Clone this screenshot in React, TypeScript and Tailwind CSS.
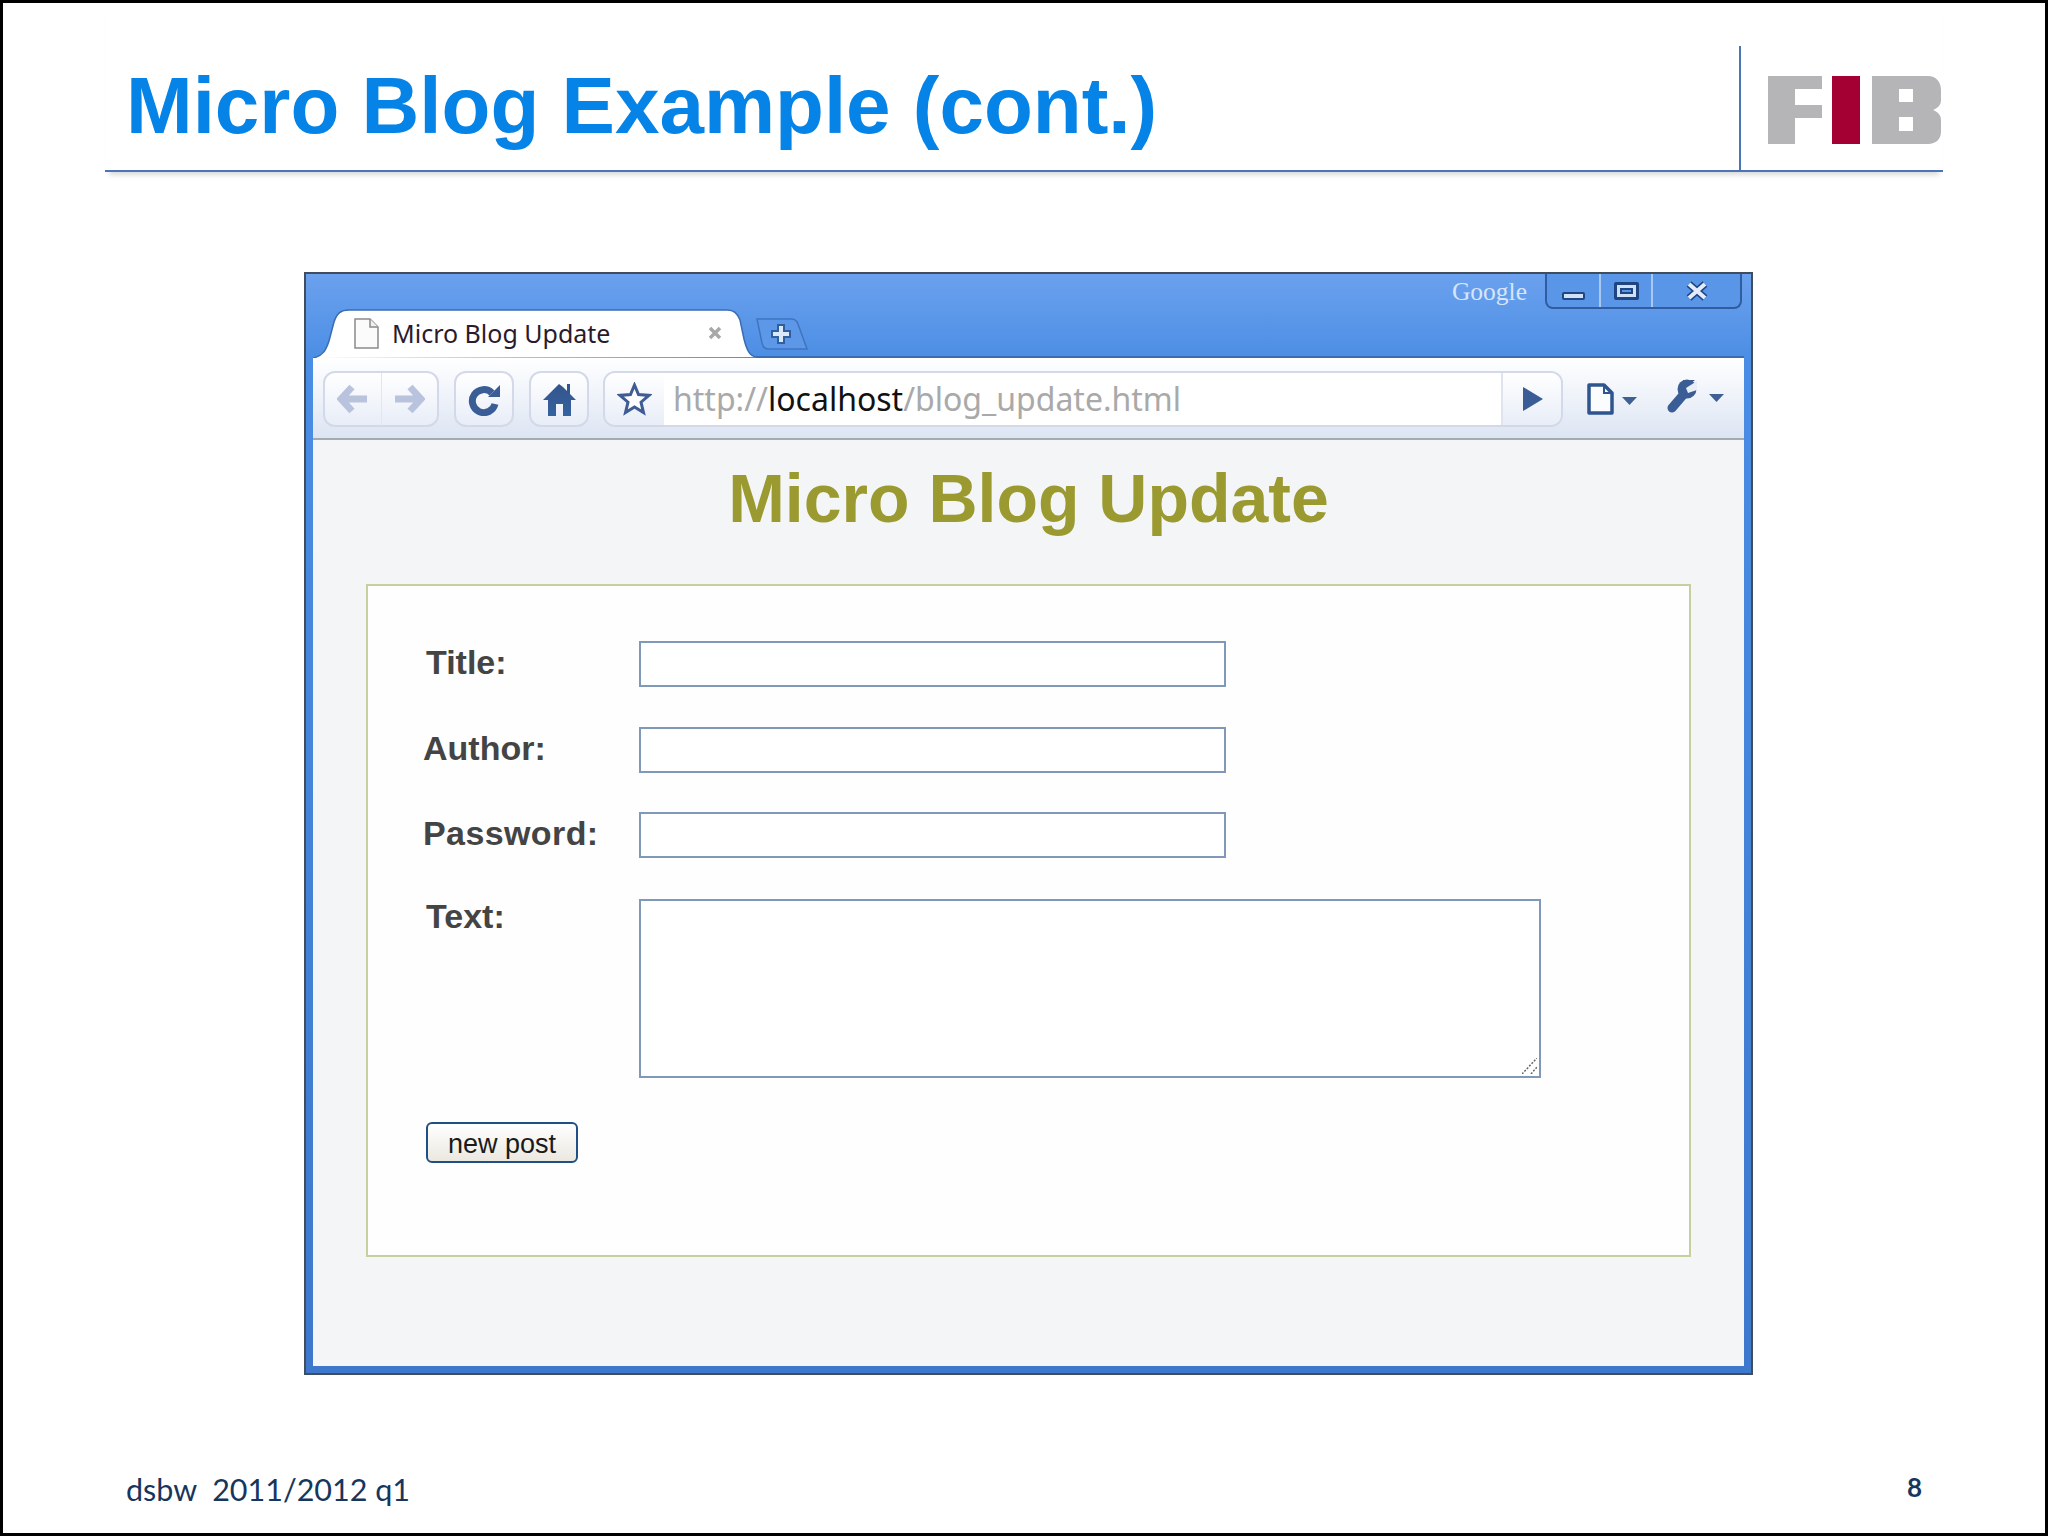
import React from 'react';

const sans = "font-['Liberation_Sans',Arial,sans-serif]";

function FibLogo() {
	return (
		<svg width="174" height="68" viewBox="0 0 174 68">
			<path d="M0 0H54V13H27V29H54V42H27V68H0Z" fill="#b5b5b7" />
			<rect x="64" y="0" width="28" height="68" fill="#a50034" />
			<path
				fillRule="evenodd"
				d="M104 0H160C168 0 173 6 173 14V24C173 29 170 32 165 34C170 36 173 39 173 44V56C173 63 168 68 160 68H104ZM131 13V26H145V13ZM131 41V55H145V41Z"
				fill="#b5b5b7"
			/>
		</svg>
	);
}

function Tab() {
	return (
		<div className="relative h-[49px] w-[443px]">
			<svg className="absolute inset-0" width="443" height="49" viewBox="0 0 443 49">
				<path
					d="M0 49C10 47 13 41 16 32L21 13C24 4 28 1 36 1H414C421 1 424 4 427 11L431 30C434 42 437 47 443 48"
					fill="#ffffff"
					stroke="#3a6cb2"
					strokeWidth="1.5"
				/>
			</svg>
			<div className="relative flex h-full items-center pb-[1px] pl-[41px]">
				<svg width="25" height="31" viewBox="0 0 25 31">
					<path d="M1 1H16L24 9V30H1Z" fill="#fbfbfb" stroke="#8b8b8b" strokeWidth="1.5" />
					<path d="M16 1V9H24" fill="#f0f0f0" stroke="#8b8b8b" strokeWidth="1.5" />
				</svg>
				<span className="ml-[13px] w-[316px] font-['Noto_Sans',sans-serif] text-[25px] leading-none text-[#2b1a2a]">
					Micro Blog Update
				</span>
				<svg width="14" height="14" viewBox="0 0 14 14">
					<path d="M2 2L12 12M12 2L2 12" stroke="#a8a8a8" strokeWidth="3.5" />
				</svg>
			</div>
		</div>
	);
}

function NewTab() {
	return (
		<div className="mt-[9px]">
			<svg width="52" height="32" viewBox="0 0 52 32">
				<path
					d="M1 1H35C39 1 41 3 42 6L51 31H12C9 31 7 29 6 25Z"
					fill="#5d97e8"
					stroke="#3f74bf"
					strokeWidth="1.5"
				/>
				<path d="M25 6V26M15 16H35" stroke="#2f5f9f" strokeWidth="8" />
				<path d="M25 8V24M17 16H33" stroke="#dbe8fa" strokeWidth="4" />
			</svg>
		</div>
	);
}

function WindowControls() {
	return (
		<div className="flex h-[35px] w-[197px] rounded-b-lg border-x-2 border-b-2 border-[#2f5d9f] bg-[#5a96e8]">
			<div className="flex w-[52px] items-end justify-center pb-[7px]">
				<div className="h-[8px] w-[23px] rounded-[2px] border-2 border-[#1f4583] bg-[#cfe0f7]" />
			</div>
			<div className="flex w-[54px] items-start justify-center border-x-2 border-[#a9c8f2] pt-[8px]">
				<div className="flex h-[18px] w-[25px] items-center justify-center rounded-[2px] border-[3px] border-[#1f4583] bg-[#cfe0f7]">
					<div className="h-[6px] w-[13px] border-2 border-[#1f4583] bg-[#5a96e8]" />
				</div>
			</div>
			<div className="flex flex-1 items-start justify-center pt-[7px]">
				<svg width="24" height="20" viewBox="0 0 24 20">
					<path d="M4 3L20 17M20 3L4 17" stroke="#1f4583" strokeWidth="7" />
					<path d="M4 3L20 17M20 3L4 17" stroke="#e2ecfb" strokeWidth="4" />
				</svg>
			</div>
		</div>
	);
}

function ToolButton({ children }: { children: React.ReactNode }) {
	return (
		<div className="flex h-[56px] w-[60px] items-center justify-center rounded-[12px] border-2 border-[#d3d9e8] bg-gradient-to-b from-white to-[#e8edf7]">
			{children}
		</div>
	);
}

function Caret() {
	return (
		<svg className="mt-[3px]" width="15" height="8" viewBox="0 0 15 8">
			<path d="M0 0H15L7.5 8Z" fill="#3f6094" />
		</svg>
	);
}

function Toolbar() {
	return (
		<div className="flex h-[82px] items-start border-b-2 border-[#a4aaae] bg-gradient-to-b from-white to-[#dde5f3] pl-[10px] pt-[13px]">
			<div className="flex h-[56px] w-[116px] rounded-[12px] border-2 border-[#d3d9e8] bg-gradient-to-b from-white to-[#e8edf7]">
				<div className="flex flex-1 items-center justify-center border-r border-[#e1e6f0]">
					<svg width="31" height="30" viewBox="0 0 31 30">
						<path d="M15 3L4 15L15 27M4 15H30" fill="none" stroke="#b9c3de" strokeWidth="7" />
					</svg>
				</div>
				<div className="flex flex-1 items-center justify-center">
					<svg width="31" height="30" viewBox="0 0 31 30">
						<path d="M16 3L27 15L16 27M27 15H1" fill="none" stroke="#b9c3de" strokeWidth="7" />
					</svg>
				</div>
			</div>
			<div className="ml-[15px]">
				<ToolButton>
					<svg width="33" height="33" viewBox="0 0 33 33">
						<path d="M24 10A11.5 11.5 0 1 0 27 21" fill="none" stroke="#3b5d96" strokeWidth="7" />
						<path d="M20 14H32V2Z" fill="#3b5d96" />
					</svg>
				</ToolButton>
			</div>
			<div className="ml-[15px]">
				<ToolButton>
					<svg width="33" height="34" viewBox="0 0 33 34">
						<defs>
							<linearGradient id="homeFill" x1="0" y1="0" x2="0" y2="1">
								<stop offset="0" stopColor="#33548c" />
								<stop offset="1" stopColor="#36639f" />
							</linearGradient>
						</defs>
						<path
							d="M16 2L0 18H5V34H13V22H20V34H28V18H33L27 12V2H24V9L20 5Z"
							fill="url(#homeFill)"
						/>
					</svg>
				</ToolButton>
			</div>
			<div className="ml-[14px] flex h-[56px] w-[960px] overflow-hidden rounded-[12px] border-2 border-[#d3d9e8]">
				<div className="flex w-[59px] items-center justify-center bg-gradient-to-b from-white to-[#e8edf7]">
					<svg width="35" height="34" viewBox="0 0 35 34">
						<path
							d="M17.5 3L21.5 12.6L32 13.4L24 20.2L26.5 30.5L17.5 25L8.5 30.5L11 20.2L3 13.4L13.5 12.6Z"
							fill="#fdfdfe"
							stroke="#3f5d94"
							strokeWidth="3"
						/>
					</svg>
				</div>
				<div className="flex flex-1 items-center bg-white pl-[9px] font-['Noto_Sans',sans-serif] text-[32px] text-[#a9a9a9]">
					<span>http://</span>
					<span className="text-[#111]">localhost</span>
					<span>/blog_update.html</span>
				</div>
				<div className="flex w-[60px] items-center justify-center border-l-2 border-[#dfe4ee] bg-gradient-to-b from-white to-[#e8edf7] pl-[1px]">
					<svg width="20" height="24" viewBox="0 0 20 24">
						<path d="M0 0L20 12L0 24Z" fill="#3b5d96" />
					</svg>
				</div>
			</div>
			<div className="ml-[24px] mt-[12px] flex items-center gap-[8px]">
				<svg width="27" height="32" viewBox="0 0 27 32">
					<path d="M2 2H17L25 10V30H2Z" fill="#fbfcfe" stroke="#2f5590" strokeWidth="3.5" strokeLinejoin="round" />
					<path d="M17 2V10H25" fill="none" stroke="#2f5590" strokeWidth="2" />
				</svg>
				<Caret />
			</div>
			<div className="ml-[30px] mt-[8px] flex items-center gap-[12px]">
				<svg width="30" height="34" viewBox="0 0 30 34">
					<path d="M5 29L17 15" fill="none" stroke="#3b5d96" strokeWidth="9" strokeLinecap="round" />
					<circle cx="20" cy="10" r="9.5" fill="#3b5d96" />
					<path d="M19 9L30 2V11L21 14Z" fill="#e8edf7" />
					<path d="M16 1H28L22 6H16Z" fill="#3b5d96" />
				</svg>
				<Caret />
			</div>
		</div>
	);
}

function FormRow({ label, top, labelClass }: { label: string; top: string; labelClass: string }) {
	return (
		<div className={`flex items-start ${top}`}>
			<label className={`pt-[1px] text-[34px] font-bold leading-[40px] text-[#444] ${labelClass}`}>{label}</label>
			<input
				type="text"
				className="h-[46px] w-[587px] border-2 border-[#8099b8] bg-white outline-none"
			/>
		</div>
	);
}

function PageContent() {
	return (
		<div className={`flex-1 bg-[#f4f5f7] pt-[18px] ${sans}`}>
			<h1 className="text-center text-[68px] font-bold leading-[80px] text-[#9a9a30]">Micro Blog Update</h1>
			<div className="ml-[53px] mt-[46px] h-[673px] w-[1325px] border-2 border-[#c8cf9f] bg-[#fefefe] pl-[58px] pt-[55px]">
				<FormRow label="Title:" top="" labelClass="w-[213px]" />
				<FormRow label="Author:" top="mt-[40px]" labelClass="-ml-[3px] w-[216px]" />
				<FormRow label="Password:" top="mt-[39px]" labelClass="-ml-[3px] w-[216px] tracking-[0.4px]" />
				<div className="mt-[41px] flex items-start">
					<label className="-mt-[3px] w-[213px] text-[34px] font-bold leading-[40px] text-[#444]">Text:</label>
					<div className="relative h-[179px] w-[902px]">
						<textarea className="block h-full w-full resize-none border-2 border-[#8099b8] bg-white outline-none" />
						<svg className="absolute bottom-[4px] right-[4px]" width="15" height="16" viewBox="0 0 15 16">
							<path d="M0 16L15 0M9 16L15 9" stroke="#666" strokeWidth="1.5" strokeDasharray="2 1.5" />
						</svg>
					</div>
				</div>
				<button
					type="button"
					className="mt-[44px] h-[41px] w-[152px] rounded-[6px] border-2 border-[#1f4f85] bg-gradient-to-b from-white to-[#ebe8e0] pt-[3px] text-[27px] leading-none text-[#1a1a1a]"
				>
					new post
				</button>
			</div>
		</div>
	);
}

export default function App() {
	return (
		<div className={`flex h-[1536px] w-[2048px] flex-col overflow-hidden border-[3px] border-black bg-white ${sans}`}>
			{/* slide header */}
			<header className="ml-[102px] flex h-[169px] w-[1838px] justify-between border-b-2 border-[#4a76b5] shadow-[0_7px_5px_-4px_rgba(0,0,0,0.15)]">
				<h1 className="pl-[21px] pt-[57px] text-[80px] font-bold leading-[92px] text-[#0583e6]">
					Micro Blog Example (cont.)
				</h1>
				<div className="mt-[43px] h-[124px] w-[204px] border-l-2 border-[#4a76b5] pl-[27px] pt-[30px]">
					<FibLogo />
				</div>
			</header>

			{/* browser screenshot */}
			<div className="ml-[301px] mt-[100px] h-[1103px] w-[1449px] border-2 border-[#3f4d5e] bg-gradient-to-b from-[#6ba1ee] via-[#4a8de4] via-[8%] to-[#3d78cc]">
				<div className="flex h-full flex-col px-[7px] pb-[7px]">
					<div className="flex h-[35px] items-start justify-end pr-[2px]">
						<span className="mr-[18px] mt-[2px] font-['Liberation_Serif',serif] text-[25.5px] leading-[32px] text-[#d6e5f9]">
							Google
						</span>
						<WindowControls />
					</div>
					<div className="flex h-[49px] items-start">
						<Tab />
						<div className="h-full flex-1 border-b-2 border-[#3a6cb2]">
							<NewTab />
						</div>
					</div>
					<Toolbar />
					<PageContent />
				</div>
			</div>

			{/* slide footer */}
			<footer className="mt-auto flex h-[64px] items-start justify-between pl-[123px] pr-[123px]">
				<span className="whitespace-pre font-['Lato',sans-serif] text-[30.5px] leading-[40px] text-[#17365d]">
					dsbw  2011/2012 q1
				</span>
				<span className="mt-[3px] font-['Lato',sans-serif] text-[26px] font-bold leading-[30px] text-[#17365d]">8</span>
			</footer>
		</div>
	);
}
